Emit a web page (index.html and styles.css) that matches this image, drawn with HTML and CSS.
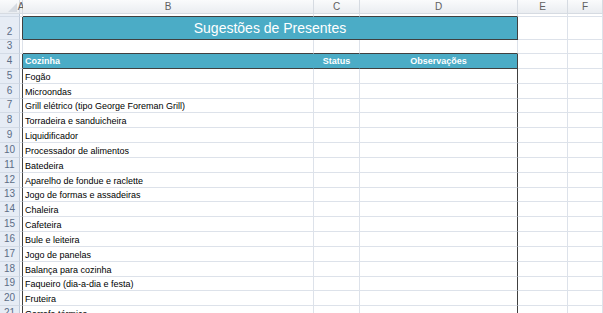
FILE: index.html
```html
<!DOCTYPE html>
<html lang="pt">
<head>
<meta charset="utf-8">
<title>Sugestões de Presentes</title>
<link rel="stylesheet" href="styles.css">
</head>
<body>
<div class="sheet">
  <div class="ch corner"><svg width="19" height="13" viewBox="0 0 19 13"><polygon points="17,3 17,12 8,12" fill="#d6dbe2"/></svg></div>
  <div class="ch cha">A</div>
  <div class="ch">B</div>
  <div class="ch">C</div>
  <div class="ch">D</div>
  <div class="ch">E</div>
  <div class="ch">F</div>

  <div class="rh r1">1</div>
  <div class="c a"></div>
  <div class="c topdark"></div>
  <div class="c topdark"></div>
  <div class="c topdark"></div>
  <div class="c"></div>
  <div class="c"></div>

  <div class="rh">2</div>
  <div class="c a edge"></div>
  <div class="c title">Sugestões de Presentes</div>
  <div class="c"></div>
  <div class="c"></div>

  <div class="rh">3</div>
  <div class="c a"></div>
  <div class="c topdark"></div>
  <div class="c topdark"></div>
  <div class="c topdark"></div>
  <div class="c"></div>
  <div class="c"></div>

  <div class="rh">4</div>
  <div class="c a edge"></div>
  <div class="c hd hd-b">Cozinha</div>
  <div class="c hd hd-c">Status</div>
  <div class="c hd hd-d">Observações</div>
  <div class="c"></div>
  <div class="c"></div>

  <div class="rh">5</div><div class="c a edge"></div><div class="c txt">Fogão</div><div class="c"></div><div class="c edge"></div><div class="c"></div><div class="c"></div>
  <div class="rh">6</div><div class="c a edge"></div><div class="c txt">Microondas</div><div class="c"></div><div class="c edge"></div><div class="c"></div><div class="c"></div>
  <div class="rh">7</div><div class="c a edge"></div><div class="c txt">Grill elétrico (tipo George Foreman Grill)</div><div class="c"></div><div class="c edge"></div><div class="c"></div><div class="c"></div>
  <div class="rh">8</div><div class="c a edge"></div><div class="c txt">Torradeira e sanduicheira</div><div class="c"></div><div class="c edge"></div><div class="c"></div><div class="c"></div>
  <div class="rh">9</div><div class="c a edge"></div><div class="c txt">Liquidificador</div><div class="c"></div><div class="c edge"></div><div class="c"></div><div class="c"></div>
  <div class="rh">10</div><div class="c a edge"></div><div class="c txt">Processador de alimentos</div><div class="c"></div><div class="c edge"></div><div class="c"></div><div class="c"></div>
  <div class="rh">11</div><div class="c a edge"></div><div class="c txt">Batedeira</div><div class="c"></div><div class="c edge"></div><div class="c"></div><div class="c"></div>
  <div class="rh">12</div><div class="c a edge"></div><div class="c txt">Aparelho de fondue e raclette</div><div class="c"></div><div class="c edge"></div><div class="c"></div><div class="c"></div>
  <div class="rh">13</div><div class="c a edge"></div><div class="c txt">Jogo de formas e assadeiras</div><div class="c"></div><div class="c edge"></div><div class="c"></div><div class="c"></div>
  <div class="rh">14</div><div class="c a edge"></div><div class="c txt">Chaleira</div><div class="c"></div><div class="c edge"></div><div class="c"></div><div class="c"></div>
  <div class="rh">15</div><div class="c a edge"></div><div class="c txt">Cafeteira</div><div class="c"></div><div class="c edge"></div><div class="c"></div><div class="c"></div>
  <div class="rh">16</div><div class="c a edge"></div><div class="c txt">Bule e leiteira</div><div class="c"></div><div class="c edge"></div><div class="c"></div><div class="c"></div>
  <div class="rh">17</div><div class="c a edge"></div><div class="c txt">Jogo de panelas</div><div class="c"></div><div class="c edge"></div><div class="c"></div><div class="c"></div>
  <div class="rh">18</div><div class="c a edge"></div><div class="c txt">Balança para cozinha</div><div class="c"></div><div class="c edge"></div><div class="c"></div><div class="c"></div>
  <div class="rh">19</div><div class="c a edge"></div><div class="c txt">Faqueiro (dia-a-dia e festa)</div><div class="c"></div><div class="c edge"></div><div class="c"></div><div class="c"></div>
  <div class="rh">20</div><div class="c a edge"></div><div class="c txt">Fruteira</div><div class="c"></div><div class="c edge"></div><div class="c"></div><div class="c"></div>
  <div class="rh">21</div><div class="c a edge"></div><div class="c txt">Garrafa térmica</div><div class="c"></div><div class="c edge"></div><div class="c"></div><div class="c"></div>
  <div class="rh">22</div><div class="c a edge"></div><div class="c txt"></div><div class="c"></div><div class="c edge"></div><div class="c"></div><div class="c"></div>
</div>
</body>
</html>
```

FILE: styles.css
```css
html, body {
  margin: 0;
  padding: 0;
  background: #ffffff;
  overflow: hidden;
}

body {
  font-family: "Liberation Sans", Arial, sans-serif;
}

.sheet {
  display: grid;
  grid-template-columns: 20px 3px 291px 46px 158px 50px 1fr;
  grid-template-rows: 14px 3px 23px 14px 15px repeat(18, 14.83px);
  width: 603px;
  height: 313px;
  overflow: hidden;
}

.sheet > div {
  box-sizing: border-box;
  border-right: 1px solid #dde2ea;
  border-bottom: 1px solid #dde2ea;
  overflow: hidden;
  white-space: nowrap;
  display: flex;
  align-items: flex-end;
  font-size: 9px;
  line-height: 11px;
  color: #000;
  min-width: 0;
}

.sheet > .ch {
  background: linear-gradient(#fafbfc, #eaedf1);
  border-right-color: #d6dbe2;
  border-bottom-color: #d6dbe2;
  justify-content: center;
  align-items: center;
  font-size: 10px;
  line-height: 13px;
  color: #606060;
}

.sheet > .corner {
  padding: 0;
  align-items: flex-start;
  justify-content: flex-start;
}

.sheet > .cha {
  overflow: visible;
}

.sheet > .rh {
  background: #e6ecf5;
  border-right-color: #bfcad9;
  border-bottom-color: #d3dbe6;
  justify-content: center;
  font-size: 10px;
  line-height: 12px;
  color: #5c6d86;
  padding-bottom: 1px;
}

.sheet > .r1 {
  padding-bottom: 0;
}

.sheet > .edge {
  border-right-color: #404040;
}

.sheet > .topdark {
  border-bottom-color: #404040;
}

.sheet > .title {
  grid-column: span 3;
  background: #4bacc6;
  color: #ffffff;
  font-size: 14px;
  line-height: 17px;
  justify-content: center;
  border-right-color: #404040;
  border-bottom-color: #404040;
  padding-bottom: 2px;
}

.sheet > .hd {
  background: #4bacc6;
  color: #ffffff;
  font-weight: bold;
  border-bottom-color: #404040;
  border-right-color: #4bacc6;
  padding-bottom: 1px;
}

.sheet > .hd-b {
  padding-left: 2px;
}

.sheet > .hd-c {
  justify-content: center;
}

.sheet > .hd-d {
  justify-content: center;
  border-right-color: #404040;
}

.sheet > .txt {
  padding-left: 2px;
}
```
